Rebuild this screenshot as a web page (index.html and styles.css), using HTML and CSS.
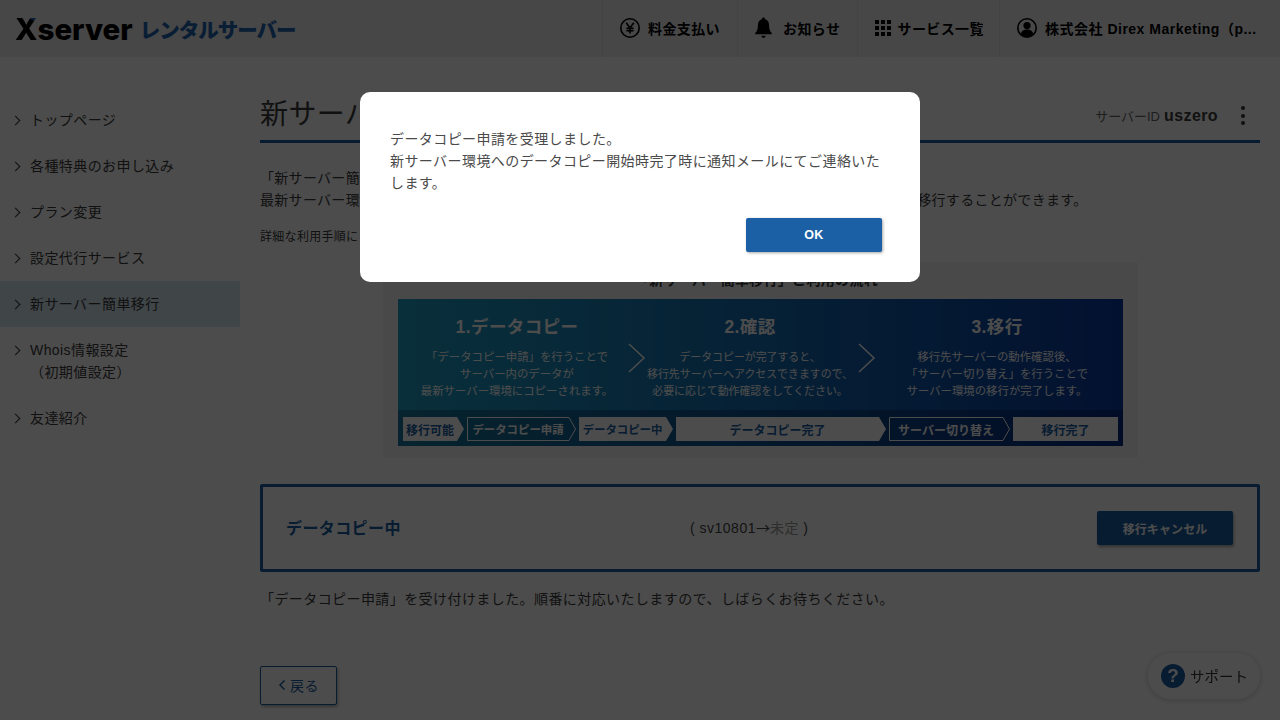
FILE: index.html
```html
<!DOCTYPE html>
<html lang="ja">
<head>
<meta charset="utf-8">
<title>新サーバー簡単移行</title>
<link rel="stylesheet" href="styles.css">
</head>
<body>
<header class="topbar">
  <a class="logo"><span class="logo-x">X</span>server<span class="logo-sub">レンタルサーバー</span></a>
  <nav class="topnav">
    <a class="topnav-item item-pay">
      <svg class="ico" width="22" height="22" viewBox="0 0 22 22" fill="none" stroke="#000" stroke-width="1.6"><circle cx="11" cy="11" r="9.2"/><path d="M7.2 5.8 11 11l3.8-5.2M11 11v5.6M7.4 11.2h7.2M7.4 13.6h7.2"/></svg>
      <span>料金支払い</span>
    </a>
    <a class="topnav-item item-news">
      <svg class="ico" width="19" height="22" viewBox="2.500 1 17 20.500" fill="#000"><path d="M11 1.500c.9 0 1.400.6 1.500 1.500 2.600.7 3.700 2.900 3.700 5.700 0 4 1 5.700 2.500 7.300v1H3.300v-1c1.500-1.600 2.500-3.300 2.500-7.300 0-2.800 1.100-5 3.700-5.700.1-.9.6-1.500 1.500-1.500z"/><path d="M9 18.500h4a2 2 0 0 1-4 0z"/></svg>
      <span>お知らせ</span>
    </a>
    <a class="topnav-item item-svc">
      <span class="dots"><i></i><i></i><i></i><i></i><i></i><i></i><i></i><i></i><i></i></span>
      <span>サービス一覧</span>
    </a>
    <a class="topnav-item item-user">
      <svg class="ico" width="22" height="22" viewBox="0 0 22 22"><circle cx="11" cy="11" r="9.200" fill="none" stroke="#000" stroke-width="1.600"/><circle cx="11" cy="8.600" r="3.600"/><path d="M4.600 17.200c.8-3.200 3.200-4.600 6.400-4.600s5.600 1.400 6.400 4.600A9 9 0 0 1 11 20a9 9 0 0 1-6.400-2.800z"/></svg>
      <span class="user-name">株式会社 Direx Marketing（p...</span>
    </a>
  </nav>
</header>
<div class="layout">
  <aside class="side">
    <a class="side-item">トップページ</a>
    <a class="side-item">各種特典のお申し込み</a>
    <a class="side-item">プラン変更</a>
    <a class="side-item">設定代行サービス</a>
    <a class="side-item active">新サーバー簡単移行</a>
    <a class="side-item">Whois情報設定<br>（初期値設定）</a>
    <a class="side-item">友達紹介</a>
  </aside>
  <main class="main">
    <div class="title-row">
      <h1 class="title">新サーバー簡単移行</h1>
      <div class="server-id">
        <span class="sid-label">サーバーID</span><b class="sid-value">uszero</b>
        <span class="kebab"><i></i><i></i><i></i></span>
      </div>
    </div>
    <p class="lead">「新サーバー簡単移行」<br>最新サーバー環境へデータをコピーし、お客様の操作なしでウェブサイトやメールなどの各種データを移行することができます。</p>
    <p class="note">詳細な利用手順に</p>
    <section class="flow">
      <h2 class="flow-title">「新サーバー簡単移行」ご利用の流れ</h2>
      <div class="flow-panel">
        <div class="steps">
          <div class="step s1">
            <h3>1.データコピー</h3>
            <p>「データコピー申請」を行うことで<br>サーバー内のデータが<br>最新サーバー環境にコピーされます。</p>
          </div>
          <svg class="chev" width="18" height="30" viewBox="0 0 18 30" fill="none" stroke="#fff" stroke-width="1.500"><path d="M1 1 16 15 1 29"/></svg>
          <div class="step s2">
            <h3>2.確認</h3>
            <p>データコピーが完了すると、<br>移行先サーバーへアクセスできますので、<br>必要に応じて動作確認をしてください。</p>
          </div>
          <svg class="chev" width="18" height="30" viewBox="0 0 18 30" fill="none" stroke="#fff" stroke-width="1.500"><path d="M1 1 16 15 1 29"/></svg>
          <div class="step s3">
            <h3>3.移行</h3>
            <p>移行先サーバーの動作確認後、<br>「サーバー切り替え」を行うことで<br>サーバー環境の移行が完了します。</p>
          </div>
        </div>
        <div class="track">
          <span class="tag w61 solid arrow">移行可能</span>
          <span class="tag w109 outline tight">データコピー申請<svg class="tag-line" width="109" height="24" viewBox="0 0 109 24" fill="none" stroke="#fff"><path d="M.5.5H102L108.500 12 102 23.500H.5Z"/></svg></span>
          <span class="tag w94 solid arrow tight">データコピー中</span>
          <span class="tag w210 solid arrow">データコピー完了</span>
          <span class="tag w121 outline">サーバー切り替え<svg class="tag-line" width="121" height="24" viewBox="0 0 121 24" fill="none" stroke="#fff"><path d="M.5.5H114L120.500 12 114 23.500H.5Z"/></svg></span>
          <span class="tag w105 solid">移行完了</span>
        </div>
      </div>
    </section>
    <section class="status">
      <strong class="status-name">データコピー中</strong>
      <span class="status-route">( sv10801<span class="route-arrow">→</span><em>未定</em> )</span>
      <a class="btn-cancel">移行キャンセル</a>
    </section>
    <p class="status-note">「データコピー申請」を受け付けました。順番に対応いたしますので、しばらくお待ちください。</p>
    <a class="btn-back"><svg width="8" height="12" viewBox="0 0 8 12" fill="none" stroke="#1b5fa5" stroke-width="1.500"><path d="M6.500 1.500 2 6l4.500 4.500"/></svg>戻る</a>
  </main>
</div>
<a class="support"><span class="support-q">?</span>サポート</a>
<div class="backdrop">
  <div class="modal">
    <p>データコピー申請を受理しました。<br>新サーバー環境へのデータコピー開始時完了時に通知メールにてご連絡いたします。</p>
    <div class="modal-actions"><a class="btn-ok">OK</a></div>
  </div>
</div>
</body>
</html>
```
FILE: styles.css
```css
* { box-sizing: border-box; }
html, body { margin: 0; height: 720px; overflow: hidden; }
body {
  background: #fff;
  color: #3a3a3a;
  font-family: "Liberation Sans", "Noto Sans CJK JP", sans-serif;
  font-size: 14px;
  letter-spacing: .42px;
}
p, h1, h2, h3 { margin: 0; }
.topbar {
  height: 57px;
  background: #eee;
  display: flex;
  justify-content: space-between;
}
.logo {
  display: flex;
  align-items: center;
  padding: 0 0 0 15px;
  font-family: Inter, sans-serif;
  font-weight: 800;
  font-size: 29.500px;
  letter-spacing: 0;
  color: #000;
}
.logo-x {
  background: linear-gradient(215deg, #1b5fa5 24%, #000 24.500%);
  -webkit-background-clip: text;
  background-clip: text;
  color: transparent;
}
.logo-sub {
  margin-left: 7px;
  font-family: "Noto Sans CJK JP", sans-serif;
  font-weight: 900;
  font-size: 20.500px;
  letter-spacing: -1px;
  color: #1f66b0;
}
.topnav { display: flex; }
.topnav-item {
  display: flex;
  align-items: center;
  gap: 8px;
  padding: 0 0 1px 16px;
  border-left: 1px solid #e0e0e0;
  font-weight: 700;
  font-size: 14px;
  letter-spacing: .4px;
  color: #000;
}
.item-pay { width: 135px; gap: 7px; }
.item-news { width: 120px; gap: 10px; }
.item-svc { width: 142px; padding-left: 17px; gap: 7px; }
.item-user { width: 281px; letter-spacing: .5px; gap: 7px; }
.dots { display: grid; grid-template-columns: repeat(3, 3.500px); gap: 2.500px; }
.dots i { width: 3.500px; height: 3.500px; background: #000; }
.layout { display: flex; }
.side { width: 240px; padding-top: 40px; flex: none; }
.side-item {
  display: block;
  position: relative;
  padding: 12px 10px 12px 30px;
  line-height: 22px;
  color: #3a3a3a;
}
.side-item::before {
  content: "";
  position: absolute;
  left: 12px;
  top: 20px;
  width: 6px;
  height: 6px;
  border-top: 1.500px solid #333;
  border-right: 1.500px solid #333;
  transform: rotate(45deg);
}
.side-item.active { background: #d6e6f2; }
.main { flex: 1; padding: 0 20px; }
.title-row {
  margin-top: 36px;
  height: 50px;
  display: flex;
  justify-content: space-between;
  align-items: center;
  border-bottom: 3px solid #1b5fa5;
}
.title { font-size: 28px; font-weight: 400; letter-spacing: .4px; line-height: 40px; margin-bottom: 3px; }
.server-id { display: flex; align-items: center; margin-bottom: 2px; }
.sid-label { font-size: 13px; color: #666; letter-spacing: 0; }
.sid-value { margin-left: 4px; font-size: 16px; letter-spacing: .4px; }
.kebab { display: grid; gap: 3.500px; margin: 0 15px 0 23px; }
.kebab i { width: 4px; height: 4px; border-radius: 50%; background: #333; }
.lead { margin-top: 24px; line-height: 22px; letter-spacing: .3px; }
.note { margin-top: 17px; font-size: 12px; line-height: 18px; letter-spacing: .3px; }
.flow {
  margin: 16px auto 0 123px;
  width: 755px;
  height: 196px;
  background: #f4f6f8;
  padding: 8px 15px 0;
}
.flow-title { font-size: 14px; line-height: 20px; text-align: center; margin-bottom: 9px; padding-right: 8px; letter-spacing: .3px; }
.flow-panel { height: 147px; background: linear-gradient(90deg, #1f9fc4, #093aa0); color: #fff; }
.steps { height: 111px; display: flex; align-items: flex-start; }
.step { text-align: center; font-size: 11.400px; line-height: 17px; letter-spacing: 0; padding-top: 16px; white-space: nowrap; }
.step h3 { font-size: 17.500px; line-height: 24px; margin-bottom: 10px; letter-spacing: .4px; }
.s1 { width: 230px; padding-left: 8px; }
.s2 { width: 212px; padding-right: 4px; }
.s2 p { font-size: 10.900px; }
.s3 { width: 247px; padding-right: 5px; }
.chev { flex: none; margin-top: 44px; }
.track {
  height: 36px;
  background: rgba(0, 0, 40, .25);
  display: flex;
  align-items: center;
  gap: 3px;
  padding: 2px 5px 0;
}
.tag {
  height: 24px;
  display: flex;
  align-items: center;
  justify-content: center;
  font-size: 12px;
  font-weight: 700;
  letter-spacing: 0;
  position: relative;
  flex: none;
}
.tag.tight { font-size: 11.400px; }
.w61 { width: 61px; }
.w109 { width: 109px; }
.w94 { width: 94px; }
.w210 { width: 210px; }
.w121 { width: 121px; }
.w105 { width: 105px; }
.solid { background: #fff; color: #1b5fa5; }
.solid.arrow { clip-path: polygon(0 0, calc(100% - 7px) 0, 100% 50%, calc(100% - 7px) 100%, 0 100%); padding-right: 7px; }
.outline { color: #fff; padding-right: 7px; }
.tag-line { position: absolute; left: 0; top: 0; }
.status {
  margin-top: 26px;
  height: 88px;
  border: 3px solid #1b5fa5;
  border-radius: 2px;
  display: flex;
  align-items: center;
  padding: 0 24px 0 23px;
}
.status-name { width: 404px; color: #1b5fa5; font-size: 16px; letter-spacing: .4px; margin-bottom: 2px; }
.status-route { color: #444; letter-spacing: .5px; margin-bottom: 2px; }
.route-arrow { font-family: "Noto Sans CJK JP", sans-serif; letter-spacing: 0; }
.status-route em { font-style: normal; color: #999; }
.btn-cancel {
  margin-left: auto;
  width: 136px;
  height: 34px;
  display: flex;
  align-items: center;
  justify-content: center;
  background: #1b5fa5;
  color: #fff;
  font-size: 12px;
  letter-spacing: .1px;
  font-weight: 700;
  border-radius: 2px;
  box-shadow: 1px 2px 3px rgba(0,0,0,.35);
}
.status-note { margin-top: 16px; line-height: 22px; }
.btn-back {
  margin-top: 56px;
  width: 77px;
  height: 39px;
  display: flex;
  align-items: center;
  justify-content: center;
  gap: 4px;
  padding-bottom: 1px;
  border: 1px solid #1b5fa5;
  border-radius: 2px;
  color: #1b5fa5;
  box-shadow: 1px 2px 3px rgba(0,0,0,.3);
}
.support {
  position: fixed;
  right: 20px;
  bottom: 21px;
  width: 112px;
  height: 46px;
  border-radius: 23px;
  background: #fff;
  box-shadow: 0 1px 6px rgba(0,0,0,.2);
  display: flex;
  align-items: center;
  padding-left: 13px;
  padding-bottom: 1px;
  gap: 5px;
  font-size: 14.500px;
  letter-spacing: 0;
  color: #333;
}
.support-q {
  width: 24px;
  height: 24px;
  border-radius: 50%;
  background: #1b5fa5;
  color: #fff;
  font-weight: 700;
  font-size: 19px;
  display: flex;
  align-items: center;
  justify-content: center;
}
.backdrop {
  position: fixed;
  inset: 0;
  background: rgba(0, 0, 0, .7);
}
.modal {
  position: absolute;
  left: 360px;
  top: 92px;
  width: 560px;
  height: 190px;
  background: #fff;
  border-radius: 10px;
  padding: 36px 38px 0 30px;
  line-height: 22px;
}
.modal p { color: #4a4a4a; }
.modal-actions { display: flex; justify-content: flex-end; margin-top: 24px; }
.btn-ok {
  width: 136px;
  height: 34px;
  display: flex;
  align-items: center;
  justify-content: center;
  background: #1b5fa5;
  color: #fff;
  font-size: 12.500px;
  font-weight: 700;
  border-radius: 2px;
  box-shadow: 1px 1px 3px rgba(0,0,0,.35);
}
```
